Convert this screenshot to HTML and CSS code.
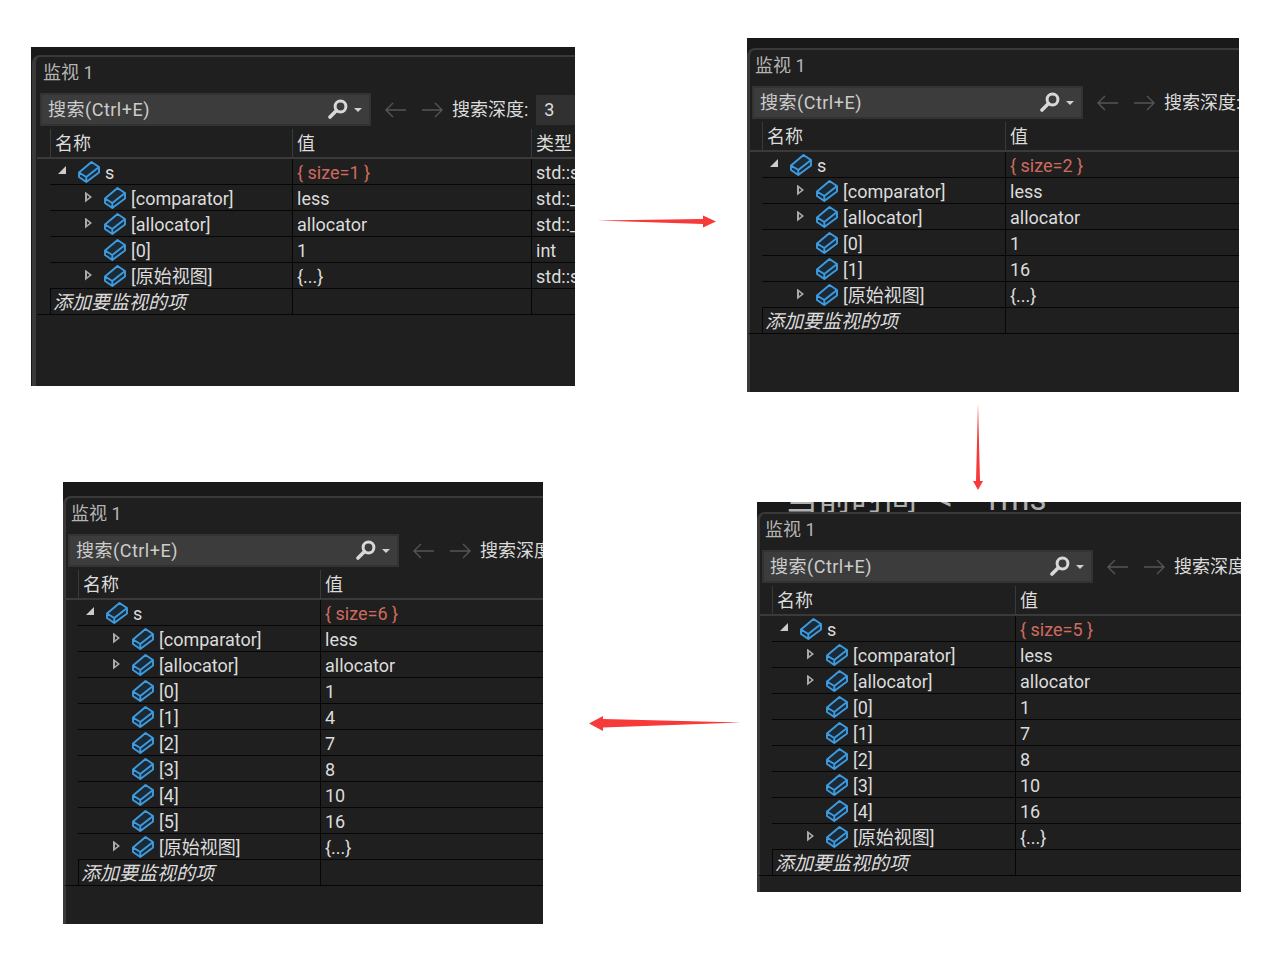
FILE: index.html
```html
<!DOCTYPE html>
<html lang="zh">
<head>
<meta charset="utf-8">
<title>监视 1</title>
<link rel="stylesheet" href="styles.css">
</head>
<body>
<svg class="defs" width="0" height="0" aria-hidden="true">
  <symbol id="obj" viewBox="0 0 22 22">
    <path d="M1 11.5 L13.5 1 L21 6 L21 11.5 L8.3 21 L1 16 Z" fill="#1c2a36"/>
    <path d="M1 11.5 L13.5 1 L21 6 L21 11.5 L8.3 21 L1 16 Z M1 11.5 L8.3 16 L21 6 M8.3 16 V21" fill="none" stroke="#3d9be0" stroke-width="1.9" stroke-linejoin="round"/>
  </symbol>
  <symbol id="lens" viewBox="0 0 20 20">
    <circle cx="12.5" cy="7.5" r="5.4" fill="none" stroke="#d8d8d8" stroke-width="3"/>
    <path d="M8.5 11.5 L2 18" stroke="#d8d8d8" stroke-width="3.6" stroke-linecap="round"/>
  </symbol>
  <symbol id="nav" viewBox="0 0 60 18">
    <path d="M22 9H2M9 2L2 9L9 16M38 9H58M51 2L58 9L51 16" fill="none" stroke="#555" stroke-width="1.4"/>
  </symbol>
</svg>

<section class="win win-a">
  <div class="panel">
  <div class="title">监视 1</div>
  <div class="tools">
    <div class="search"><span>搜索(Ctrl+E)</span><svg class="lens"><use href="#lens"/></svg><i class="drop"></i></div>
    <svg class="nav"><use href="#nav"/></svg>
    <span class="depth">搜索深度:</span><span class="depth-val">3</span>
  </div>
  <div class="grid three">
    <div class="row head"><div class="c name">名称</div><div class="c val">值</div><div class="c typ">类型</div></div>
    <div class="row"><div class="c name l0"><i class="tw open"></i><svg class="ico"><use href="#obj"/></svg>s</div><div class="c val red">{ size=1 }</div><div class="c typ">std::set&lt;int&gt;</div></div>
    <div class="row"><div class="c name l1"><i class="tw"></i><svg class="ico"><use href="#obj"/></svg>[comparator]</div><div class="c val">less</div><div class="c typ">std::_Tree</div></div>
    <div class="row"><div class="c name l1"><i class="tw"></i><svg class="ico"><use href="#obj"/></svg>[allocator]</div><div class="c val">allocator</div><div class="c typ">std::_Tree</div></div>
    <div class="row"><div class="c name l1"><i class="tw none"></i><svg class="ico"><use href="#obj"/></svg>[0]</div><div class="c val">1</div><div class="c typ">int</div></div>
    <div class="row"><div class="c name l1"><i class="tw"></i><svg class="ico"><use href="#obj"/></svg>[原始视图]</div><div class="c val">{...}</div><div class="c typ">std::set&lt;int&gt;</div></div>
    <div class="row add"><div class="c name"><em>添加要监视的项</em></div><div class="c val"></div><div class="c typ"></div></div>
  </div>
  </div>
</section>

<section class="win win-b">
  <div class="panel">
  <div class="title">监视 1</div>
  <div class="tools">
    <div class="search"><span>搜索(Ctrl+E)</span><svg class="lens"><use href="#lens"/></svg><i class="drop"></i></div>
    <svg class="nav"><use href="#nav"/></svg>
    <span class="depth">搜索深度:</span>
  </div>
  <div class="grid wide">
    <div class="row head"><div class="c name">名称</div><div class="c val">值</div></div>
    <div class="row"><div class="c name l0"><i class="tw open"></i><svg class="ico"><use href="#obj"/></svg>s</div><div class="c val red">{ size=2 }</div></div>
    <div class="row"><div class="c name l1"><i class="tw"></i><svg class="ico"><use href="#obj"/></svg>[comparator]</div><div class="c val">less</div></div>
    <div class="row"><div class="c name l1"><i class="tw"></i><svg class="ico"><use href="#obj"/></svg>[allocator]</div><div class="c val">allocator</div></div>
    <div class="row"><div class="c name l1"><i class="tw none"></i><svg class="ico"><use href="#obj"/></svg>[0]</div><div class="c val">1</div></div>
    <div class="row"><div class="c name l1"><i class="tw none"></i><svg class="ico"><use href="#obj"/></svg>[1]</div><div class="c val">16</div></div>
    <div class="row"><div class="c name l1"><i class="tw"></i><svg class="ico"><use href="#obj"/></svg>[原始视图]</div><div class="c val">{...}</div></div>
    <div class="row add"><div class="c name"><em>添加要监视的项</em></div><div class="c val"></div></div>
  </div>
  </div>
</section>

<section class="win win-c">
  <div class="cut"><span class="cut-a">当前时间</span><span class="cut-b">&lt;-</span><span class="cut-c">1ms</span></div>
  <div class="panel">
  <div class="title">监视 1</div>
  <div class="tools">
    <div class="search"><span>搜索(Ctrl+E)</span><svg class="lens"><use href="#lens"/></svg><i class="drop"></i></div>
    <svg class="nav"><use href="#nav"/></svg>
    <span class="depth">搜索深度:</span>
  </div>
  <div class="grid wide">
    <div class="row head"><div class="c name">名称</div><div class="c val">值</div></div>
    <div class="row"><div class="c name l0"><i class="tw open"></i><svg class="ico"><use href="#obj"/></svg>s</div><div class="c val red">{ size=5 }</div></div>
    <div class="row"><div class="c name l1"><i class="tw"></i><svg class="ico"><use href="#obj"/></svg>[comparator]</div><div class="c val">less</div></div>
    <div class="row"><div class="c name l1"><i class="tw"></i><svg class="ico"><use href="#obj"/></svg>[allocator]</div><div class="c val">allocator</div></div>
    <div class="row"><div class="c name l1"><i class="tw none"></i><svg class="ico"><use href="#obj"/></svg>[0]</div><div class="c val">1</div></div>
    <div class="row"><div class="c name l1"><i class="tw none"></i><svg class="ico"><use href="#obj"/></svg>[1]</div><div class="c val">7</div></div>
    <div class="row"><div class="c name l1"><i class="tw none"></i><svg class="ico"><use href="#obj"/></svg>[2]</div><div class="c val">8</div></div>
    <div class="row"><div class="c name l1"><i class="tw none"></i><svg class="ico"><use href="#obj"/></svg>[3]</div><div class="c val">10</div></div>
    <div class="row"><div class="c name l1"><i class="tw none"></i><svg class="ico"><use href="#obj"/></svg>[4]</div><div class="c val">16</div></div>
    <div class="row"><div class="c name l1"><i class="tw"></i><svg class="ico"><use href="#obj"/></svg>[原始视图]</div><div class="c val">{...}</div></div>
    <div class="row add"><div class="c name"><em>添加要监视的项</em></div><div class="c val"></div></div>
  </div>
  </div>
</section>

<section class="win win-d">
  <div class="panel">
  <div class="title">监视 1</div>
  <div class="tools">
    <div class="search"><span>搜索(Ctrl+E)</span><svg class="lens"><use href="#lens"/></svg><i class="drop"></i></div>
    <svg class="nav"><use href="#nav"/></svg>
    <span class="depth">搜索深度:</span>
  </div>
  <div class="grid">
    <div class="row head"><div class="c name">名称</div><div class="c val">值</div></div>
    <div class="row"><div class="c name l0"><i class="tw open"></i><svg class="ico"><use href="#obj"/></svg>s</div><div class="c val red">{ size=6 }</div></div>
    <div class="row"><div class="c name l1"><i class="tw"></i><svg class="ico"><use href="#obj"/></svg>[comparator]</div><div class="c val">less</div></div>
    <div class="row"><div class="c name l1"><i class="tw"></i><svg class="ico"><use href="#obj"/></svg>[allocator]</div><div class="c val">allocator</div></div>
    <div class="row"><div class="c name l1"><i class="tw none"></i><svg class="ico"><use href="#obj"/></svg>[0]</div><div class="c val">1</div></div>
    <div class="row"><div class="c name l1"><i class="tw none"></i><svg class="ico"><use href="#obj"/></svg>[1]</div><div class="c val">4</div></div>
    <div class="row"><div class="c name l1"><i class="tw none"></i><svg class="ico"><use href="#obj"/></svg>[2]</div><div class="c val">7</div></div>
    <div class="row"><div class="c name l1"><i class="tw none"></i><svg class="ico"><use href="#obj"/></svg>[3]</div><div class="c val">8</div></div>
    <div class="row"><div class="c name l1"><i class="tw none"></i><svg class="ico"><use href="#obj"/></svg>[4]</div><div class="c val">10</div></div>
    <div class="row"><div class="c name l1"><i class="tw none"></i><svg class="ico"><use href="#obj"/></svg>[5]</div><div class="c val">16</div></div>
    <div class="row"><div class="c name l1"><i class="tw"></i><svg class="ico"><use href="#obj"/></svg>[原始视图]</div><div class="c val">{...}</div></div>
    <div class="row add"><div class="c name"><em>添加要监视的项</em></div><div class="c val"></div></div>
  </div>
  </div>
</section>

<svg class="arrow arrow-r" width="122" height="16" viewBox="0 0 122 16"><path d="M0 6.5 L106 5 L106 1.5 L119 7.5 L106 13.5 L106 10 Z" fill="#f63a3a"/></svg>
<svg class="arrow arrow-dn" width="12" height="90" viewBox="0 0 12 90"><path d="M6 0 L8 78 L11 78 L6 87 L1 78 L4 78 Z" fill="#f63a3a"/></svg>
<svg class="arrow arrow-l" width="154" height="18" viewBox="0 0 154 18"><path d="M153 7.5 L15 4 L15 1 L1 8.5 L15 16 L15 12.5 Z" fill="#f63a3a"/></svg>
</body>
</html>
```
FILE: styles.css
```css
* { box-sizing: border-box; }
html, body { margin: 0; height: 100%; background: #fff; }
body {
  position: relative;
  width: 1268px;
  height: 954px;
  overflow: hidden;
  font-family: Roboto, "Noto Sans CJK SC", sans-serif;
  font-size: 18px;
  color: #dcdcdc;
}
.defs { position: absolute; }

.win {
  position: absolute;
  background: #191919;
  overflow: hidden;
  white-space: nowrap;
  display: flex;
  flex-direction: column;
}
.win-a { left: 31px; top: 47px; width: 544px; height: 339px; padding-top: 8px; }
.win-b { left: 747px; top: 38px; width: 492px; height: 354px; padding-top: 10px; }
.win-c { left: 757px; top: 502px; width: 484px; height: 390px; }
.win-d { left: 63px; top: 482px; width: 480px; height: 442px; padding-top: 14px; }

.panel {
  flex: 1;
  min-height: 0;
  background: #1f1f1f;
  border-top: 2px solid #393939;
  border-left: 3px solid #393939;
  border-top-left-radius: 8px;
  padding-left: 2px;
}
.win-a .panel { margin-left: 1px; border-left-width: 4px; padding-left: 4px; }

.cut {
  flex: none;
  height: 10px;
  overflow: hidden;
  display: flex;
  align-items: flex-end;
  padding-left: 28px;
  line-height: 27px;
  font-size: 33px;
  color: #b0b0b0;
}
.cut-b { margin-left: 19px; }
.cut-c { margin-left: 20px; }

.title { height: 24px; line-height: 24px; margin-top: 4px; padding-left: 3px; color: #b4b4b4; }

.tools { display: flex; align-items: center; height: 33px; margin-top: 8px; }
.search {
  width: 331px;
  height: 33px;
  background: #3c3c3c;
  border: 2px solid #333;
  display: flex;
  align-items: center;
  padding-left: 6px;
  padding-right: 5px;
  flex: none;
  color: #ccc;
}
.search span { flex: 1; letter-spacing: 0.5px; margin-top: -3px; }
.lens { flex: none; width: 20px; height: 20px; margin-top: -2px; margin-left: 1px; margin-right: -1px; }
.drop {
  width: 0;
  height: 0;
  margin: 0 2px 0 7px;
  border: 4px solid transparent;
  border-top-color: #d0d0d0;
  border-bottom: 0;
}
.nav { flex: none; width: 60px; height: 18px; margin-left: 13px; }
.depth { margin-left: 8px; margin-top: -3px; flex: none; }
.depth-val {
  margin-left: 8px;
  width: 40px;
  height: 30px;
  line-height: 30px;
  padding-left: 8px;
  background: #313131;
  flex: none;
}

.grid { margin-top: 3px; }
.row {
  display: grid;
  grid-template-columns: 242px 1fr;
  height: 26px;
  line-height: 25px;
  border-bottom: 1px solid #060606;
  margin-left: 10px;
}
.wide .row { grid-template-columns: 243px 1fr; }
.three .row { grid-template-columns: 242px 239px 1fr; }
.c { overflow: hidden; padding-left: 4px; padding-top: 1px; }
.val, .typ { border-left: 1px solid #060606; }
.name { display: flex; align-items: center; }
.head {
  height: 30px;
  margin-left: -3px;
  padding-left: 13px;
  border-bottom: 2px solid #3a3a3a;
  line-height: 28px;
}
.head .c { border-left: 1px solid #3a3a3a; }
.add { margin-left: -3px; padding-left: 13px; }
.add .name { border-left: 1px solid #060606; padding-left: 2px; }
.add em { font-style: italic; font-size: 19px; }
.l0 { padding-left: 8px; }
.l1 { padding-left: 35px; }
.tw {
  flex: none;
  width: 7px;
  height: 11px;
  margin-top: -2px;
  margin-right: 12px;
  background: #aaa;
  clip-path: path(evenodd, "M0 0 L7 5.5 L0 11 Z M2 3.5 L2 7.5 L4.5 5.5 Z");
}
.tw.open {
  width: 8px;
  height: 8px;
  margin-top: -4px;
  background: #ccc;
  clip-path: polygon(100% 0, 100% 100%, 0 100%);
}
.tw.none { visibility: hidden; }
.ico { flex: none; width: 22px; height: 22px; margin-right: 5px; }
.red { color: #cf6a5e; }

.arrow { position: absolute; }
.arrow-r { left: 597px; top: 214px; }
.arrow-dn { left: 972px; top: 403px; }
.arrow-l { left: 588px; top: 715px; }
```
